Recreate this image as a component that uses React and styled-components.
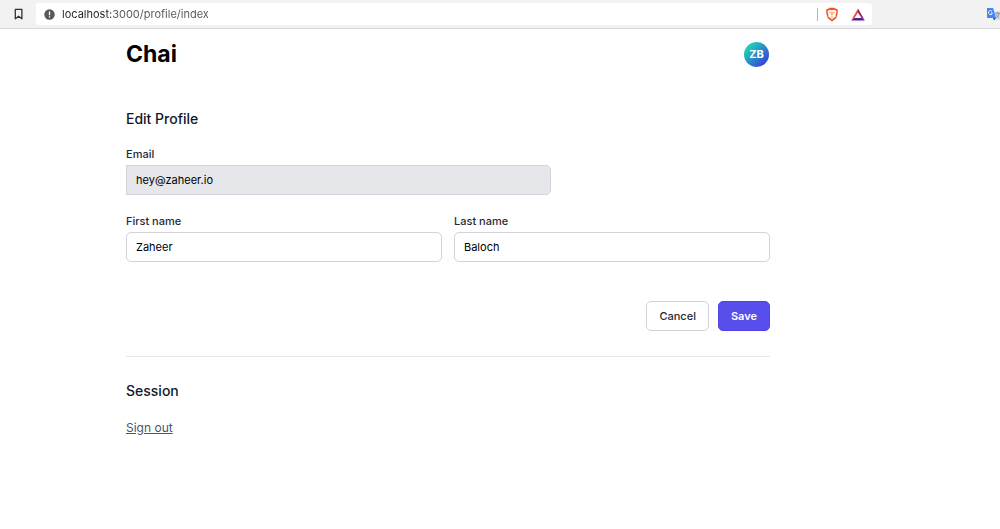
import styled, { createGlobalStyle } from 'styled-components';

const GlobalStyle = createGlobalStyle`
  * {
    box-sizing: border-box;
  }

  body {
    margin: 0;
    background: #fff;
    color: #111827;
    font-family: Inter, 'Liberation Sans', sans-serif;
  }

  h1, h2, p {
    margin: 0;
  }
`;

const Toolbar = styled.div`
  display: flex;
  align-items: center;
  height: 29px;
  padding-left: 12px;
  background: #f2f2f2;
  border-bottom: 1px solid #d5d9d9;
`;

const IconButton = styled.button`
  display: flex;
  padding: 0;
  border: 0;
  background: none;
`;

const AddressBar = styled.div`
  display: flex;
  align-items: center;
  flex: 1;
  height: 22px;
  margin-left: 11px;
  margin-right: 114px;
  padding: 0 7px 0 8px;
  background: #fff;
  border-radius: 3px;
`;

const Url = styled.input`
  flex: 1;
  min-width: 0;
  margin-left: 7px;
  padding: 0;
  border: 0;
  outline: 0;
  font: 400 11px/16px Inter, sans-serif;
  color: transparent;
  background: linear-gradient(to right, #222 50px, #555 50px);
  background-clip: text;
`;

const Separator = styled.span`
  width: 1px;
  height: 13px;
  margin-right: 7px;
  background: #b5b5b5;
`;

const Shields = styled.div`
  display: flex;
  align-items: center;
  gap: 12px;
`;

const Extensions = styled.div`
  display: flex;
  width: 14px;
  overflow: hidden;
`;

const Page = styled.div`
  max-width: 770px;
  padding-left: 126px;
`;

const Header = styled.header`
  display: flex;
  align-items: center;
  justify-content: space-between;
  height: 50px;
`;

const Logo = styled.h1`
  font-size: 23px;
  line-height: 32px;
  font-weight: 700;
  color: #000;
`;

const Avatar = styled.button`
  width: 25px;
  height: 25px;
  padding: 0;
  margin-right: 1px;
  border: 0;
  border-radius: 50%;
  background: linear-gradient(135deg, #1de0b1 10%, #3730e0 95%);
  color: #fff;
  font: 700 11px/25px Inter, sans-serif;
`;

const Title = styled.h2`
  font-size: 14px;
  line-height: 19px;
  font-weight: 500;
`;

const Form = styled.form`
  display: grid;
  grid-template-columns: 1fr 1fr;
  column-gap: 12px;
  row-gap: 18px;
  padding: 30px 0 25px;
  border-bottom: 1px solid #e5e7eb;
`;

const Heading = styled.div`
  grid-column: 1 / -1;
`;

const EmailRow = styled.div`
  grid-column: 1 / -1;
  display: grid;
  grid-template-columns: 2fr 1fr;
  padding-right: 6px;
`;

const Field = styled.div`
  display: flex;
  flex-direction: column;
  gap: 3px;
`;

const Label = styled.label`
  font-size: 11px;
  line-height: 16px;
  font-weight: 500;
  color: #1f2937;
`;

const Input = styled.input`
  width: 100%;
  height: 30px;
  padding: 0 9px;
  border: 1px solid #d1d5db;
  border-radius: ${(props) => (props.readOnly ? '0 5px 5px 0' : '5px')};
  background: ${(props) => (props.readOnly ? '#e5e7eb' : '#fff')};
  color: #000;
  font: 400 11px/16px Inter, sans-serif;
`;

const Actions = styled.div`
  grid-column: 1 / -1;
  display: flex;
  justify-content: flex-end;
  gap: 9px;
  padding-top: 21px;
`;

const Button = styled.button`
  height: 30px;
  padding: 0 12px;
  border: 1px solid ${(props) => (props.$primary ? '#4f46e5' : '#d1d5db')};
  border-radius: 5px;
  background: ${(props) => (props.$primary ? '#574eeb' : '#fff')};
  color: ${(props) => (props.$primary ? '#fff' : '#1f2937')};
  font: ${(props) => (props.$primary ? 600 : 500)} 11px/16px Inter, sans-serif;
`;

const Session = styled.section`
  display: flex;
  flex-direction: column;
  align-items: flex-start;
  gap: 19px;
  padding: 24px 0;
`;

const SignOut = styled.a`
  font-size: 12px;
  line-height: 18px;
  color: #4b5563;
  text-decoration: underline;
`;

const BookmarkIcon = () => (
  <svg width="13" height="14" viewBox="0 0 13 14" fill="none" stroke="#333" strokeWidth="1.3">
    <path d="M3.3 2.4h6.6v9.4L6.6 9.2 3.3 11.8z" strokeLinejoin="round" />
  </svg>
);

const InfoIcon = () => (
  <svg width="11" height="11" viewBox="0 0 11 11">
    <circle cx="5.5" cy="5.5" r="5.2" fill="#55585c" />
    <path d="M5.5 2.5v3.7M5.5 7.2v1.4" stroke="#fff" strokeWidth="1.3" />
  </svg>
);

const BraveIcon = () => (
  <svg width="14" height="15" viewBox="0 0 14 15">
    <path d="M4.2.8h5.6l1.2 1.1 1.2.2.8 1.8-.4 1 .2.8-1.5 5.6L7 14.5l-4.3-3.2L1.2 5.7l.2-.8-.4-1 .8-1.8L3 1.9z" fill="#fb4f1e" />
    <path d="M4 2.8l3 .5 3-.5 1.5 2-1 3.4.2 1.6L8.6 11 7 12.6 5.4 11 3.3 9.8l.2-1.6-1-3.4z" fill="#fff" />
    <path d="M3.9 5.1l2 .5-.4 1zM10.1 5.1l-2 .5.4 1zM6.7 5h.6l.3 3-.6.6-.6-.6zM5.6 9.4L7 10l1.4-.6L7 10.8z" fill="#fb4f1e" />
  </svg>
);

const BatIcon = () => (
  <svg width="14" height="13" viewBox="0 0 14 13">
    <path d="M7 .5v4L3.5 10 .2 12.4z" fill="#ff4724" />
    <path d="M7 .5l6.8 11.9-3.3-2.4L7 4.5z" fill="#9e1f63" />
    <path d="M.2 12.4L3.5 10h7l3.3 2.4z" fill="#4b1f9a" />
  </svg>
);

const TranslateIcon = () => (
  <svg width="14" height="14" viewBox="0 0 14 14">
    <path d="M6 4h8v9H8z" fill="#dadce0" />
    <path d="M1 1h6l3 10H1.8a.8.8 0 0 1-.8-.8z" fill="#4285f4" />
    <path d="M7 11h3l-2 2.5z" fill="#2454b8" />
    <path d="M6 4.4A2 2 0 1 0 6.4 6H4.8" fill="none" stroke="#fff" strokeWidth=".9" />
    <path d="M9.2 6.3H14M11.6 5.3v1M13 6.5c-.4 2-1.4 3.3-2.7 4.3M10.2 7.4c.6 1.5 1.5 2.6 2.8 3.4" fill="none" stroke="#6d8290" strokeWidth=".8" />
  </svg>
);

const App = () => {
  return (
    <>
      <GlobalStyle />
      <Toolbar>
        <IconButton aria-label="Bookmark">
          <BookmarkIcon />
        </IconButton>
        <AddressBar>
          <InfoIcon />
          <Url aria-label="Address" defaultValue="localhost:3000/profile/index" />
          <Separator />
          <Shields>
            <IconButton aria-label="Shields">
              <BraveIcon />
            </IconButton>
            <IconButton aria-label="Rewards">
              <BatIcon />
            </IconButton>
          </Shields>
        </AddressBar>
        <Extensions>
          <IconButton aria-label="Translate">
            <TranslateIcon />
          </IconButton>
        </Extensions>
      </Toolbar>

      <Page>
        <Header>
          <Logo>Chai</Logo>
          <Avatar>ZB</Avatar>
        </Header>

        <Form onSubmit={(e) => e.preventDefault()}>
          <Heading>
            <Title>Edit Profile</Title>
          </Heading>
          <EmailRow>
            <Field>
              <Label htmlFor="email">Email</Label>
              <Input id="email" type="email" defaultValue="hey@zaheer.io" readOnly />
            </Field>
          </EmailRow>
          <Field>
            <Label htmlFor="first-name">First name</Label>
            <Input id="first-name" defaultValue="Zaheer" />
          </Field>
          <Field>
            <Label htmlFor="last-name">Last name</Label>
            <Input id="last-name" defaultValue="Baloch" />
          </Field>
          <Actions>
            <Button type="button">Cancel</Button>
            <Button type="submit" $primary>
              Save
            </Button>
          </Actions>
        </Form>

        <Session>
          <Title>Session</Title>
          <SignOut href="#">Sign out</SignOut>
        </Session>
      </Page>
    </>
  );
};

export default App;
